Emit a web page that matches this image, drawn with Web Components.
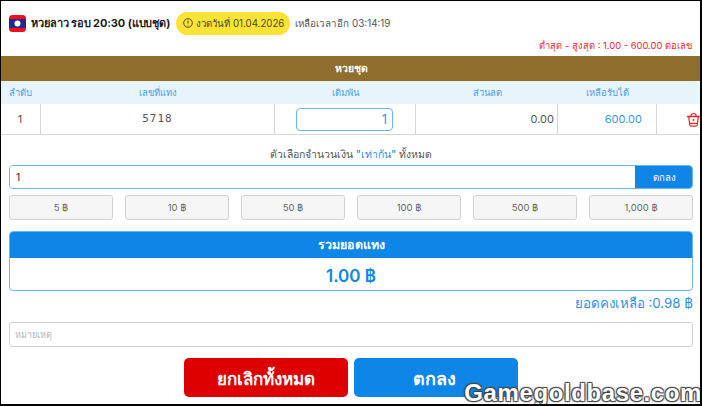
<!DOCTYPE html>
<html lang="th">
<head>
<meta charset="utf-8">
<title>หวยชุด</title>
<style>
  html, body { margin: 0; padding: 0; background: #fff; }
  body { font-family: Inter, "Noto Sans", "Liberation Sans", sans-serif; }
</style>
</head>
<body>
<bet-page></bet-page>
<script>
// Page header with flag, round name, draw date and countdown
class BetHeader extends HTMLElement {
  constructor() {
    super();
    this.attachShadow({ mode: 'open' });
  }
  connectedCallback() {
    this.shadowRoot.innerHTML = `
      <style>
        :host { display: flex; align-items: center; height: 34px; padding: 5px 0 0 9px; color: #222; }
        svg { display: block; flex: none; }
        .title { margin-left: 5px; font-size: 11px; font-weight: 700; letter-spacing: -0.1px; color: #1c1c1c; white-space: nowrap; }
        .pill { display: flex; align-items: center; gap: 3px; height: 23px; margin-left: 6px; padding: 0 6px 0 7px; border-radius: 12px; background: #fde335; font-size: 9.7px; color: #4a4a2c; white-space: nowrap; }
        .time { margin-left: 5px; font-size: 9.8px; color: #555; white-space: nowrap; }
      </style>
      <svg width="17" height="17" viewBox="0 0 17 17">
        <rect width="17" height="17" rx="3.5" fill="#f0101c"/>
        <rect y="4.2" width="17" height="8.6" fill="#1c2a8c"/>
        <circle cx="8.5" cy="8.5" r="3" fill="#fff"/>
      </svg>
      <span class="title">หวยลาว รอบ 20:30 (แบบชุด)</span>
      <span class="pill">
        <svg width="10" height="10" viewBox="0 0 10 10" fill="none" stroke="#3a3a20" stroke-width="0.9">
          <circle cx="5" cy="5" r="4.3"/><path d="M5 2.6v3M5 6.8v.7"/>
        </svg>
        งวดวันที่ 01.04.2026
      </span>
      <span class="time">เหลือเวลาอีก 03:14:19</span>
    `;
  }
}
customElements.define('bet-header', BetHeader);

// Table with brown title bar, column heads and the single bet row
class BetTable extends HTMLElement {
  constructor() {
    super();
    this.attachShadow({ mode: 'open' });
  }
  connectedCallback() {
    this.shadowRoot.innerHTML = `
      <style>
        :host { display: block; }
        .limit { height: 16px; padding-right: 10px; text-align: right; font-size: 9.4px; line-height: 12px; color: #f01f2c; }
        .bar { height: 25px; line-height: 25px; text-align: center; background: #8f6e2e; color: #fff; font-size: 10.5px; font-weight: 700; }
        .grid { display: grid; grid-template-columns: 41px 234px 141px 142px 99px 1fr; }
        .head { height: 23px; background: #e8f4fc; color: #4a9fe0; font-size: 9.5px; line-height: 23px; text-align: center; }
        .row { height: 30px; border-bottom: 1px solid #d6d6d6; font-size: 11px; line-height: 30px; color: #555; }
        .row > div { border-right: 1px solid #d6d6d6; text-align: center; box-sizing: border-box; height: 30px; }
        .row > div:last-child { border-right: 0; display: flex; align-items: center; justify-content: flex-end; padding-right: 2px; }
        .num { font-family: "DejaVu Sans Mono", "Liberation Mono", monospace; letter-spacing: 1px; }
        .row .bet { display: flex; align-items: center; justify-content: flex-end; padding-right: 22px; }
        input { box-sizing: border-box; width: 97px; height: 23px; border: 1px solid #6db3f2; border-radius: 4px; padding: 0 5px; text-align: right; font: 13px Inter, sans-serif; color: #3c97e8; outline: none; }
        .row .disc { text-align: right; padding-right: 3px; }
        .row .left { color: #3c97e8; padding-right: 14px; text-align: right; }
        .head span { display: block; }
      </style>
      <div class="limit">ต่ำสุด - สูงสุด : 1.00 - 600.00 ต่อเลข</div>
      <div class="bar">หวยชุด</div>
      <div class="grid head">
        <span>ลำดับ</span><span>เลขที่แทง</span><span>เดิมพัน</span><span>ส่วนลด</span><span>เหลือรับได้</span><span></span>
      </div>
      <div class="grid row">
        <div>1</div>
        <div class="num">5718</div>
        <div class="bet"><input value="1"></div>
        <div class="disc">0.00</div>
        <div class="left">600.00</div>
        <div>
          <svg width="13" height="15" viewBox="0 0 13 15" fill="none" stroke="#f5222d" stroke-width="1.2">
            <path d="M3.8 4.2c0-3.6 5.4-3.6 5.4 0" />
            <path d="M.6 4.4h11.8" stroke-width="1.5" stroke-linecap="round"/>
            <path d="M1.7 4.6l1 8.2c.1.9.6 1.4 1.4 1.4h4.8c.8 0 1.3-.5 1.4-1.4l1-8.2"/>
            <path d="M2.4 11.4h8.2"/>
            <circle cx="6.5" cy="8" r="1" fill="#f5222d" stroke="none"/>
          </svg>
        </div>
      </div>
    `;
  }
}
customElements.define('bet-table', BetTable);

// Amount picker: shared input plus quick amount buttons
class AmountPicker extends HTMLElement {
  constructor() {
    super();
    this.attachShadow({ mode: 'open' });
  }
  connectedCallback() {
    const amounts = ['5', '10', '50', '100', '500', '1,000'];
    this.shadowRoot.innerHTML = `
      <style>
        :host { display: block; padding: 0 9px; }
        .label { height: 30px; padding-top: 12px; box-sizing: border-box; text-align: center; font-size: 10.5px; line-height: 16px; color: #555; }
        .label b { font-weight: 500; color: #2f8fe6; }
        .line { display: flex; height: 24px; border: 1px solid #6db3f2; border-radius: 4px; overflow: hidden; box-sizing: border-box; }
        input { flex: 1; min-width: 0; border: 0; outline: 0; padding: 0 6px; font: 500 10px Inter, sans-serif; color: #444; }
        .ok { width: 58px; margin: -1px -1px -1px 0; border: 0; background: #0d86e8; color: #fff; font: 500 9.5px Inter, sans-serif; }
        .quick { display: grid; grid-template-columns: repeat(6, 1fr); gap: 12px; margin-top: 6px; }
        .quick button { height: 25px; padding: 0; border: 1px solid #d2d2d2; border-radius: 3px; background: #f6f6f6; color: #666; font: 9.5px Inter, sans-serif; }
      </style>
      <div class="label">ตัวเลือกจำนวนเงิน <b>"เท่ากัน"</b> ทั้งหมด</div>
      <div class="line"><input value="1"><button class="ok">ตกลง</button></div>
      <div class="quick">${amounts.map(a => `<button>${a} ฿</button>`).join('')}</div>
    `;
  }
}
customElements.define('amount-picker', AmountPicker);

// Total card, balance line, note field
class BetTotal extends HTMLElement {
  constructor() {
    super();
    this.attachShadow({ mode: 'open' });
  }
  connectedCallback() {
    this.shadowRoot.innerHTML = `
      <style>
        :host { display: block; padding: 11px 9px 0; }
        .card { box-sizing: border-box; height: 60px; border: 1px solid #6db3f2; border-radius: 4px; overflow: hidden; text-align: center; }
        .top { height: 27px; margin: -1px -1px 0; line-height: 28px; background: #0d86e8; color: #fff; font-size: 12.5px; font-weight: 600; }
        .value { line-height: 36px; font-size: 17px; font-weight: 600; color: #0d86e8; }
        .balance { height: 31px; text-align: right; font-size: 13.3px; line-height: 24px; color: #2f8fe6; }
        input { display: block; box-sizing: border-box; width: 100%; height: 25px; border: 1px solid #d2d2d2; border-radius: 3px; outline: 0; padding: 0 5px; font: 9px Inter, sans-serif; }
        input::placeholder { color: #b5b5b5; }
      </style>
      <div class="card">
        <div class="top">รวมยอดแทง</div>
        <div class="value">1.00 ฿</div>
      </div>
      <div class="balance">ยอดคงเหลือ :0.98 ฿</div>
      <input placeholder="หมายเหตุ">
    `;
  }
}
customElements.define('bet-total', BetTotal);

// Cancel and confirm buttons
class BetActions extends HTMLElement {
  constructor() {
    super();
    this.attachShadow({ mode: 'open' });
  }
  connectedCallback() {
    this.shadowRoot.innerHTML = `
      <style>
        :host { display: flex; justify-content: center; gap: 6px; padding-top: 11px; }
        button { width: 164px; height: 39px; padding: 1px 0 0; border: 0; border-radius: 5px; color: #fff; font: 700 17px Inter, sans-serif; }
        .cancel { background: #de0000; }
        .ok { background: #0d86e8; font-size: 18px; padding-right: 4px; }
      </style>
      <button class="cancel">ยกเลิกทั้งหมด</button>
      <button class="ok">ตกลง</button>
    `;
  }
}
customElements.define('bet-actions', BetActions);

// Page frame: black screenshot edge and the watermark over it
class BetPage extends HTMLElement {
  constructor() {
    super();
    this.attachShadow({ mode: 'open' });
  }
  connectedCallback() {
    this.shadowRoot.innerHTML = `
      <style>
        :host { display: block; position: relative; box-sizing: border-box; width: 702px; height: 406px; overflow: hidden; border: solid #000; border-width: 1px 2px 2px 1px; background: #fff; }
        .inner { margin: 0 -2px 0 -1px; }
        .mark { position: absolute; right: -2px; bottom: -3px; font: 700 24px "Liberation Sans", sans-serif; letter-spacing: 0.6px; color: #fff; text-shadow: 1px 1px 1px #444, -1px -1px 1px #444, 1px -1px 1px #444, -1px 1px 1px #444; white-space: nowrap; }
      </style>
      <div class="inner">
        <bet-header></bet-header>
        <bet-table></bet-table>
        <amount-picker></amount-picker>
        <bet-total></bet-total>
        <bet-actions></bet-actions>
      </div>
      <div class="mark">Gamegoldbase.com</div>
    `;
  }
}
customElements.define('bet-page', BetPage);
</script>
</body>
</html>
